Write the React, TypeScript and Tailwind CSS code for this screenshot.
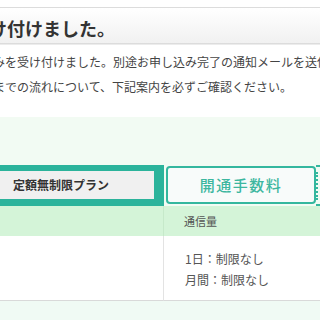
export default function App() {
  return (
    <div
      className="w-[320px] h-[320px] overflow-hidden bg-white text-[#444]"
      style={{ fontFamily: '"Noto Sans CJK JP", "Noto Sans", sans-serif' }}
    >
      {/* page heading */}
      <div className="pt-[7px]">
        <div className="h-[37px] flex items-center pt-[4px] border-t border-b border-[#dcdcdc] bg-gradient-to-b from-white to-[#f1f1f1] shadow-[0_1px_0_#ececec]">
          <h1 className="ml-[-29px] whitespace-nowrap text-[18px] font-bold text-[#333] leading-none">
            受け付けました。
          </h1>
        </div>
      </div>

      {/* message */}
      <div className="pt-[5px] text-[12px] leading-[25px] whitespace-nowrap text-[#444]">
        <p className="ml-[-19px]">込みを受け付けました。別途お申し込み完了の通知メールを送信しました。</p>
        <p className="ml-[-19px]">通までの流れについて、下記案内を必ずご確認ください。</p>
      </div>

      {/* plan area */}
      <div className="mt-[18px] h-[203px] bg-[#f2fbf3] pt-[48px]">
        <div className="flex h-[41px]">
          <div className="w-[164px] shrink-0 bg-[#2bb39b] pt-[6px] pb-[7px] pr-[10px]">
            <div className="h-full bg-[#f0f0f0] flex items-center pl-[13px] text-[12px] font-bold text-[#333]">
              定額無制限プラン
            </div>
          </div>
          <div className="ml-[2px] mt-[1px] h-[38px] w-[150px] shrink-0 rounded-[4px] border-[2.5px] border-[#34b79e] bg-[#f8fbfa] flex items-center justify-center text-[15px] font-medium tracking-[1.5px] text-[#3db79f]">
            開通手数料
          </div>
          <div className="flex-1 flex items-center border-t-[2px] border-b-[2px] border-[#34b79e]">
            <div className="h-[28px] border-l-[2px] border-dotted border-[#34b79e]"></div>
          </div>
        </div>

        <div className="grid grid-cols-[164px_1fr]">
          <div className="h-[30px] bg-[#d4f4d8] border-r border-[#c6e9ca]"></div>
          <div className="h-[30px] bg-[#d4f4d8] flex items-center pl-[20px] text-[11px] text-[#555]">
            通信量
          </div>
          <div className="h-[65px] bg-white border-r border-[#e3e3e3] border-b border-b-[#d9d9d9]"></div>
          <div className="h-[65px] bg-white border-b border-[#d9d9d9] pl-[21px] pt-[12px] text-[12px] leading-[21px] text-[#555]">
            <p>1日：制限なし</p>
            <p>月間：制限なし</p>
          </div>
        </div>
        <div className="h-full bg-[#f0faf4]"></div>
      </div>
    </div>
  );
}
